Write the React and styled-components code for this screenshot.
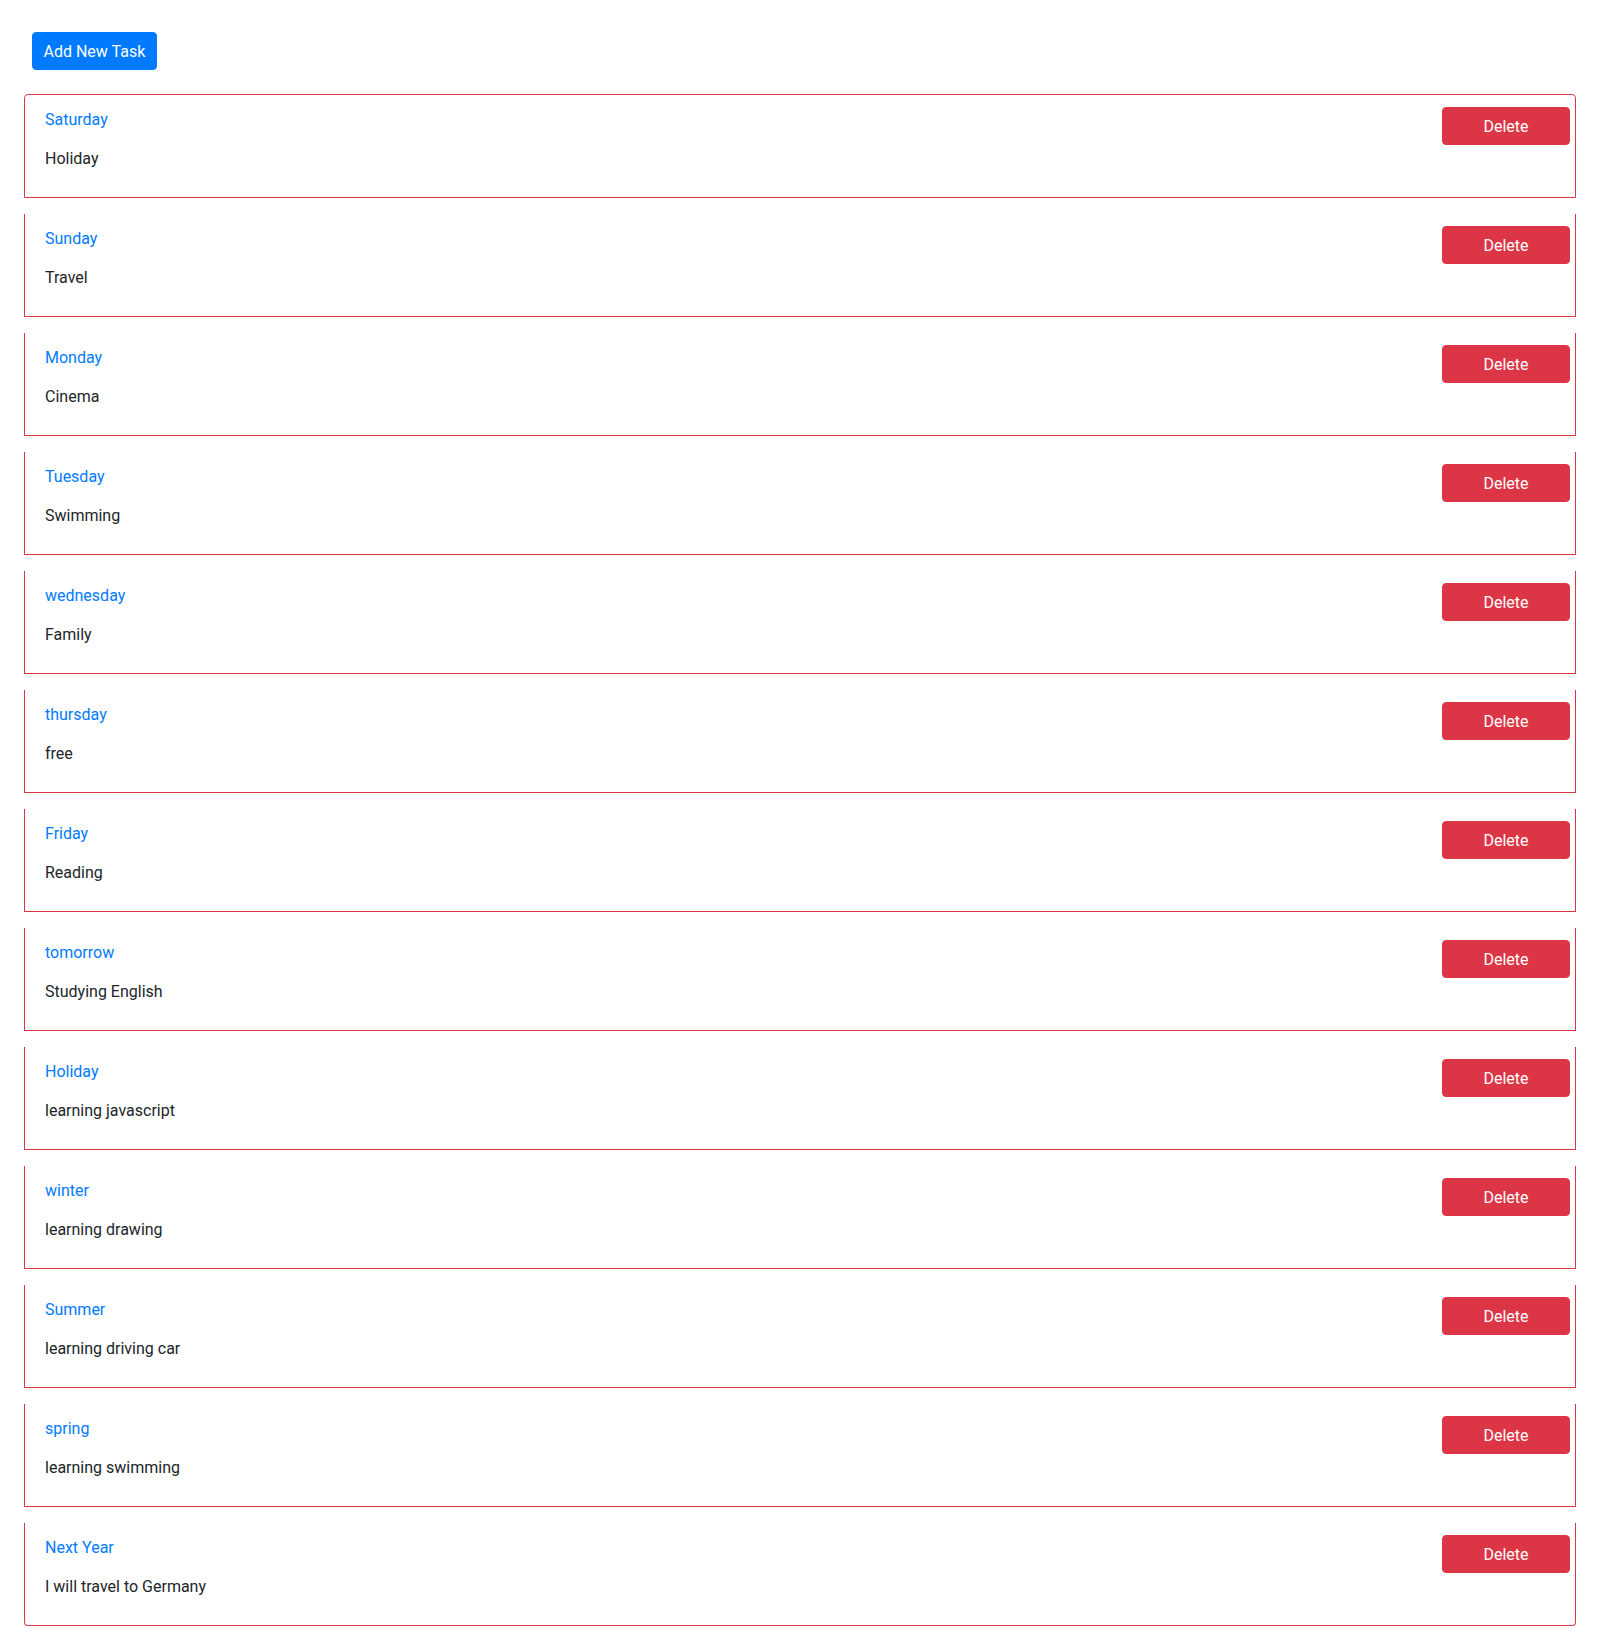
import React, { useState } from 'react';
import styled, { createGlobalStyle } from 'styled-components';

const GlobalStyle = createGlobalStyle`
  body {
    margin: 0;
    background: #fff;
    font-family: Roboto, "Noto Sans", sans-serif;
    font-size: 16px;
    color: #212529;
  }
`;

const Page = styled.div`
  padding: 24px;
`;

const Toolbar = styled.div`
  padding: 8px 8px 24px;
`;

const AddButton = styled.button`
  height: 38px;
  padding: 0 10.5px;
  border: 1px solid #007bff;
  border-radius: 4px;
  background: #007bff;
  color: #fff;
  font: inherit;
  font-size: 16px;
  cursor: pointer;
`;

const TaskList = styled.ul`
  list-style: none;
  margin: 0;
  padding: 0;
  display: flex;
  flex-direction: column;
  gap: 16px;
`;

const TaskItem = styled.li`
  display: flex;
  justify-content: space-between;
  align-items: flex-start;
  padding: 12px 5px 12px 20px;
  border: 1px solid #dc3545;
  border-top-width: ${(p) => (p.$first ? '1px' : '0')};
  border-radius: ${(p) =>
    p.$first ? '4px 4px 0 0' : p.$last ? '0 0 4px 4px' : '0'};
`;

const TaskText = styled.div`
  display: flex;
  flex-direction: column;
  padding-top: 1px;
`;

const Day = styled.span`
  color: #007bff;
  line-height: 24px;
  margin-bottom: 15px;
`;

const Note = styled.p`
  margin: 0 0 14px;
  line-height: 24px;
`;

const DeleteButton = styled.button`
  width: 128px;
  height: 38px;
  border: 1px solid #dc3545;
  border-radius: 4px;
  background: #dc3545;
  color: #fff;
  font: inherit;
  font-size: 16px;
  cursor: pointer;
`;

const initialTasks = [
  { day: 'Saturday', text: 'Holiday' },
  { day: 'Sunday', text: 'Travel' },
  { day: 'Monday', text: 'Cinema' },
  { day: 'Tuesday', text: 'Swimming' },
  { day: 'wednesday', text: 'Family' },
  { day: 'thursday', text: 'free' },
  { day: 'Friday', text: 'Reading' },
  { day: 'tomorrow', text: 'Studying English' },
  { day: 'Holiday', text: 'learning javascript' },
  { day: 'winter', text: 'learning drawing' },
  { day: 'Summer', text: 'learning driving car' },
  { day: 'spring', text: 'learning swimming' },
  { day: 'Next Year', text: 'I will travel to Germany' },
];

function App() {
  const [tasks, setTasks] = useState(initialTasks);

  return (
    <Page>
      <GlobalStyle />
      <Toolbar>
        <AddButton>Add New Task</AddButton>
      </Toolbar>
      <TaskList>
        {tasks.map((task, i) => (
          <TaskItem key={task.day} $first={i === 0} $last={i === tasks.length - 1}>
            <TaskText>
              <Day>{task.day}</Day>
              <Note>{task.text}</Note>
            </TaskText>
            <DeleteButton onClick={() => setTasks(tasks.filter((t) => t !== task))}>
              Delete
            </DeleteButton>
          </TaskItem>
        ))}
      </TaskList>
    </Page>
  );
}

export default App;
